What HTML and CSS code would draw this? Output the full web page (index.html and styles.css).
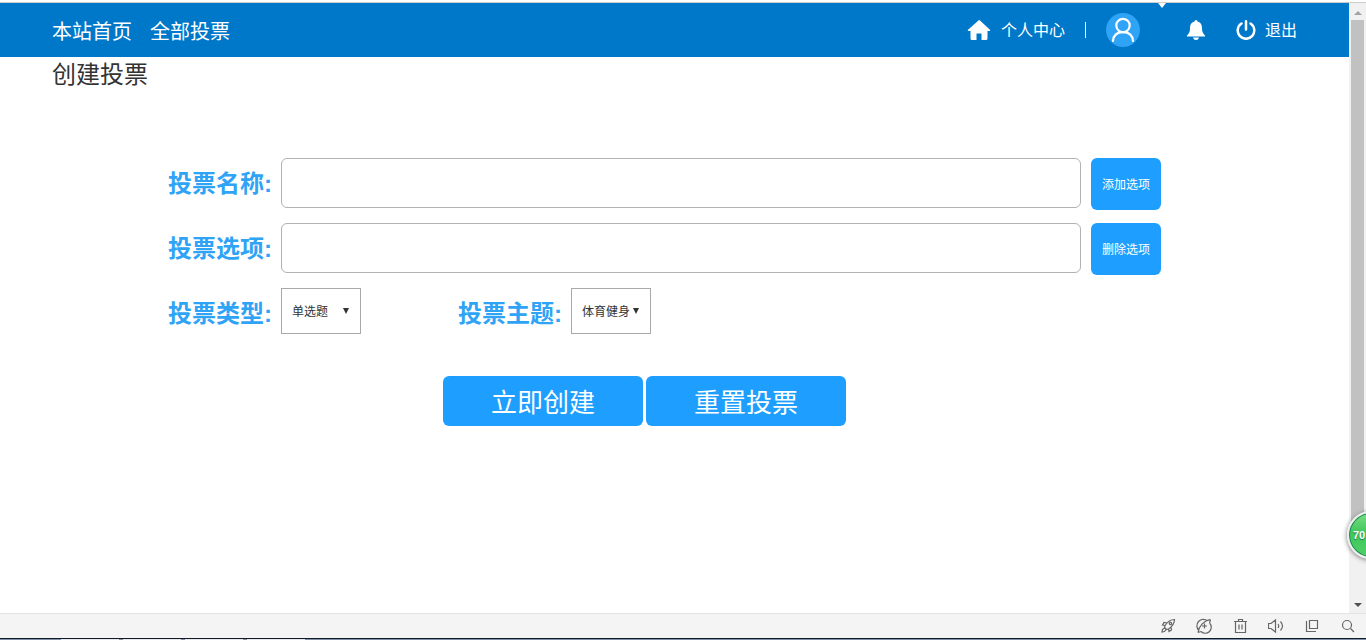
FILE: index.html
```
<!DOCTYPE html>
<html lang="zh-CN">
<head>
<meta charset="utf-8">
<title>创建投票</title>
<link rel="stylesheet" href="styles.css">
</head>
<body>
<div class="window">
  <div class="viewport">
    <div class="page">
      <header class="header">
        <nav class="nav">
          <a href="#">本站首页</a>
          <a href="#">全部投票</a>
        </nav>
        <span class="header-caret"></span>
        <div class="account">
          <a class="home" href="#">
            <svg width="24" height="22" viewBox="0 0 24 22" fill="#fff"><path d="M12 1 0.800 11Q.5 12 1.500 12H3.500V19.500Q3.500 21 5 21H9.500V14.500H14.500V21H19Q20.500 21 20.500 19.500V12H22.500Q23.500 12 23.200 11L20 8 13 1.500Q12.500 1 12 1Z"/></svg>
            <span>个人中心</span>
          </a>
          <span class="divider"></span>
          <a class="avatar" href="#" aria-label="头像">
            <svg width="34" height="34" viewBox="0 0 34 34" fill="none" stroke="#fff" stroke-width="2.200" stroke-linecap="round"><circle cx="17" cy="17" r="17" fill="#2fa3f5" stroke="none"/><circle cx="17" cy="12.500" r="6.700"/><path d="M7 28C7.500 22.500 11 19.200 17 19.200S26.500 22.500 27 28"/></svg>
          </a>
          <a class="bell" href="#" aria-label="消息">
            <svg width="20" height="20" viewBox="0 0 20 20" fill="#fff"><path d="M10 0Q11.500 0 11.500 1.500C15 2.500 16 5 16 8.500C16 12 17 13.500 19 15.500V16.500H1V15.500C3 13.500 4 12 4 8.500C4 5 5 2.500 8.500 1.500Q8.500 0 10 0ZM7 17.500H13Q12.500 20 10 20T7 17.500Z"/></svg>
          </a>
          <a class="logout" href="#">
            <svg width="20" height="20" viewBox="0 0 20 20" fill="none" stroke="#fff" stroke-width="2.500" stroke-linecap="round"><path d="M10 1.300V9.500M5.500 3.500A8.300 8.300 0 1 0 14.500 3.500"/></svg>
            <span>退出</span>
          </a>
        </div>
      </header>
      <main class="content">
        <h1 class="title">创建投票</h1>
        <form class="form">
          <div class="row">
            <label class="label" for="name">投票名称:</label>
            <input class="field" id="name" type="text">
            <button class="side-button" type="button">添加选项</button>
          </div>
          <div class="row">
            <label class="label" for="option">投票选项:</label>
            <input class="field" id="option" type="text">
            <button class="side-button" type="button">删除选项</button>
          </div>
          <div class="row selects">
            <div class="choice">
              <label class="label" for="type">投票类型:</label>
              <div class="select-box"><select id="type"><option>单选题</option><option>多选题</option></select><span class="arrow"></span></div>
            </div>
            <div class="choice">
              <label class="label" for="topic">投票主题:</label>
              <div class="select-box"><select id="topic"><option>体育健身</option></select><span class="arrow"></span></div>
            </div>
          </div>
          <div class="actions">
            <button class="main-button" type="button">立即创建</button>
            <button class="main-button" type="reset">重置投票</button>
          </div>
        </form>
      </main>
    </div>
    <div class="scrollbar">
      <span class="scroll-up"></span>
      <span class="thumb"></span>
      <span class="scroll-down"></span>
    </div>
    <div class="ball"><span>70</span></div>
  </div>
  <footer class="statusbar">
    <svg width="16" height="16" viewBox="0 0 16 16"><path d="M14.500 1.500C10.500 1.500 8 3 5 7.500L4.500 9.500 6.500 11.500 8.500 11C13 8 14.500 5.500 14.500 1.500ZM7 5 4 4.500 2.500 7 5 7.500M11 9 11.500 12 9 13.500 8.500 11M4.500 10 2.500 11.500 2 14 4.500 13.500 6 11.500"/><circle cx="10.500" cy="5.500" r="1.200"/></svg>
    <svg width="16" height="16" viewBox="0 0 16 16"><path d="M11.500 3A6 6 0 0 0 3 12.500M5 13.500A6 6 0 0 0 13.500 5M2 14.500C3 8 8 2.500 14.500 1.500M2 14.500 5 13.500M14.500 1.500 13.500 5M8.500 5.500V10.500M6 8H11"/></svg>
    <svg width="16" height="16" viewBox="0 0 16 16"><path d="M2 3.500H15M6.500 3.500V1.500H10.500V3.500M3.500 3.500V14.500H13.500V3.500M7 6.500V11.500M10 6.500V11.500"/></svg>
    <svg width="16" height="16" viewBox="0 0 16 16"><path d="M.5 5.500H3L7.500 2V14L3 10.500H.5ZM10 6Q11.500 8 10 10M12.500 3.500Q16.500 8 12.500 12.500"/></svg>
    <svg width="16" height="16" viewBox="0 0 16 16"><path d="M5.500 2.500H13.500V10.500H5.500ZM2.500 3V13.500H12"/></svg>
    <svg width="16" height="16" viewBox="0 0 16 16"><circle cx="7" cy="7" r="4.500"/><path d="M10.500 10.500 14 14"/></svg>
  </footer>
  <div class="taskbar"><span></span><span></span><span></span><span></span></div>
</div>
</body>
</html>
```

FILE: styles.css
```
* {
  box-sizing: border-box;
}

body {
  margin: 0;
  font-family: "Liberation Sans", "Noto Sans CJK SC", sans-serif;
  color: #333;
}

a {
  color: #fff;
  text-decoration: none;
}

svg {
  display: block;
}

.window {
  display: flex;
  flex-direction: column;
  height: 100vh;
  overflow: hidden;
  background: #fff;
}

.viewport {
  position: relative;
  display: flex;
  flex: 1;
  min-height: 0;
  margin-top: 2px;
  border-top: 1px solid #ccc;
}

.page {
  flex: 1;
  min-width: 0;
}

.header {
  position: relative;
  display: flex;
  align-items: center;
  justify-content: space-between;
  height: 54px;
  padding: 0 52px;
  background: #0078c9;
}

.header-caret {
  position: absolute;
  top: 0;
  right: 183px;
  border: 4px solid transparent;
  border-top: 5px solid #fff;
  border-bottom: 0;
}

.nav {
  display: flex;
  gap: 18px;
  padding-top: 4px;
  font-size: 20px;
  line-height: 30px;
}

.account,
.home,
.logout {
  display: flex;
  align-items: center;
}

.account {
  font-size: 16px;
  line-height: 24px;
}

.home span,
.logout span {
  padding-top: 2px;
}

.home {
  gap: 10px;
}

.divider {
  width: 1px;
  height: 16px;
  margin: 0 20px;
  background: #fff;
}

.bell {
  margin: 0 30px 0 46px;
}

.logout {
  gap: 9px;
}

.title {
  margin: 0;
  padding-left: 52px;
  font-size: 24px;
  font-weight: 400;
  line-height: 36px;
}

.form {
  display: flex;
  flex-direction: column;
  gap: 13px;
  padding: 65px 188px 0 168px;
}

.row {
  display: flex;
  gap: 10px;
}

.label {
  width: 103px;
  flex: none;
  color: #2fa3f5;
  font-size: 24px;
  font-weight: 700;
  line-height: 52px;
  white-space: nowrap;
}

.field {
  flex: 1;
  min-width: 0;
  height: 50px;
  padding: 0 12px;
  border: 1px solid #b2b2b2;
  border-radius: 6px;
  background: #fff;
  font: inherit;
  font-size: 20px;
}

.side-button,
.main-button {
  padding: 0 0 2px;
  border: 0;
  border-radius: 6px;
  background: #1e9fff;
  color: #fff;
  font: inherit;
}

.side-button {
  width: 70px;
  height: 52px;
  font-size: 12px;
}

.selects {
  gap: 97px;
}

.choice {
  display: flex;
  gap: 10px;
}

.select-box {
  position: relative;
  width: 80px;
  height: 46px;
}

.select-box select {
  width: 100%;
  height: 100%;
  padding: 2px 0 0 10px;
  border: 1px solid #a9a9a9;
  border-radius: 0;
  background: #fff;
  color: #333;
  font: inherit;
  font-size: 12px;
  appearance: none;
}

.arrow {
  position: absolute;
  top: 20px;
  right: 12px;
  border: 3px solid transparent;
  border-top: 6px solid #333;
  border-bottom: 0;
  pointer-events: none;
}

.actions {
  display: flex;
  justify-content: center;
  gap: 3px;
  padding: 23px 40px 0 0;
}

.main-button {
  width: 200px;
  height: 50px;
  font-size: 26px;
}

.scrollbar {
  display: flex;
  flex-direction: column;
  align-items: center;
  width: 17px;
  padding: 8px 0 6px;
  background: #f1f1f1;
}

.scroll-up,
.scroll-down {
  border: 4px solid transparent;
}

.scroll-up {
  border-top: 0;
  border-bottom-color: #a3a3a3;
}

.scroll-down {
  border-bottom: 0;
  border-top-color: #505050;
}

.thumb {
  flex: 1;
  width: 13px;
  margin: 5px 0 64px;
  background: #c1c1c1;
}

.ball {
  position: absolute;
  right: -29px;
  bottom: 54px;
  width: 48px;
  height: 48px;
  border: 2px solid #eee;
  border-radius: 50%;
  background: linear-gradient(#7bdc85, #3fc75a 45%, #4fd068);
  box-shadow: inset 0 0 0 1px #168754, 0 1px 5px #777;
  color: #fff;
  font: bold 11px/44px "Liberation Sans", sans-serif;
}

.ball span {
  padding-left: 4px;
  text-shadow: 0 1px 1px #187843;
}

.statusbar {
  display: flex;
  align-items: center;
  justify-content: flex-end;
  gap: 20px;
  height: 25px;
  padding-right: 10px;
  border-top: 1px solid #e3e3e3;
  background: #f4f4f4;
}

.statusbar svg {
  fill: none;
  stroke: #666;
  stroke-width: 1.2;
}

.taskbar {
  display: flex;
  gap: 4px;
  height: 2px;
  padding-left: 61px;
  border-top: 1px solid #101a28;
  background: #8291a8;
}

.taskbar span {
  width: 58px;
  background: #e8e8e8;
}
```
